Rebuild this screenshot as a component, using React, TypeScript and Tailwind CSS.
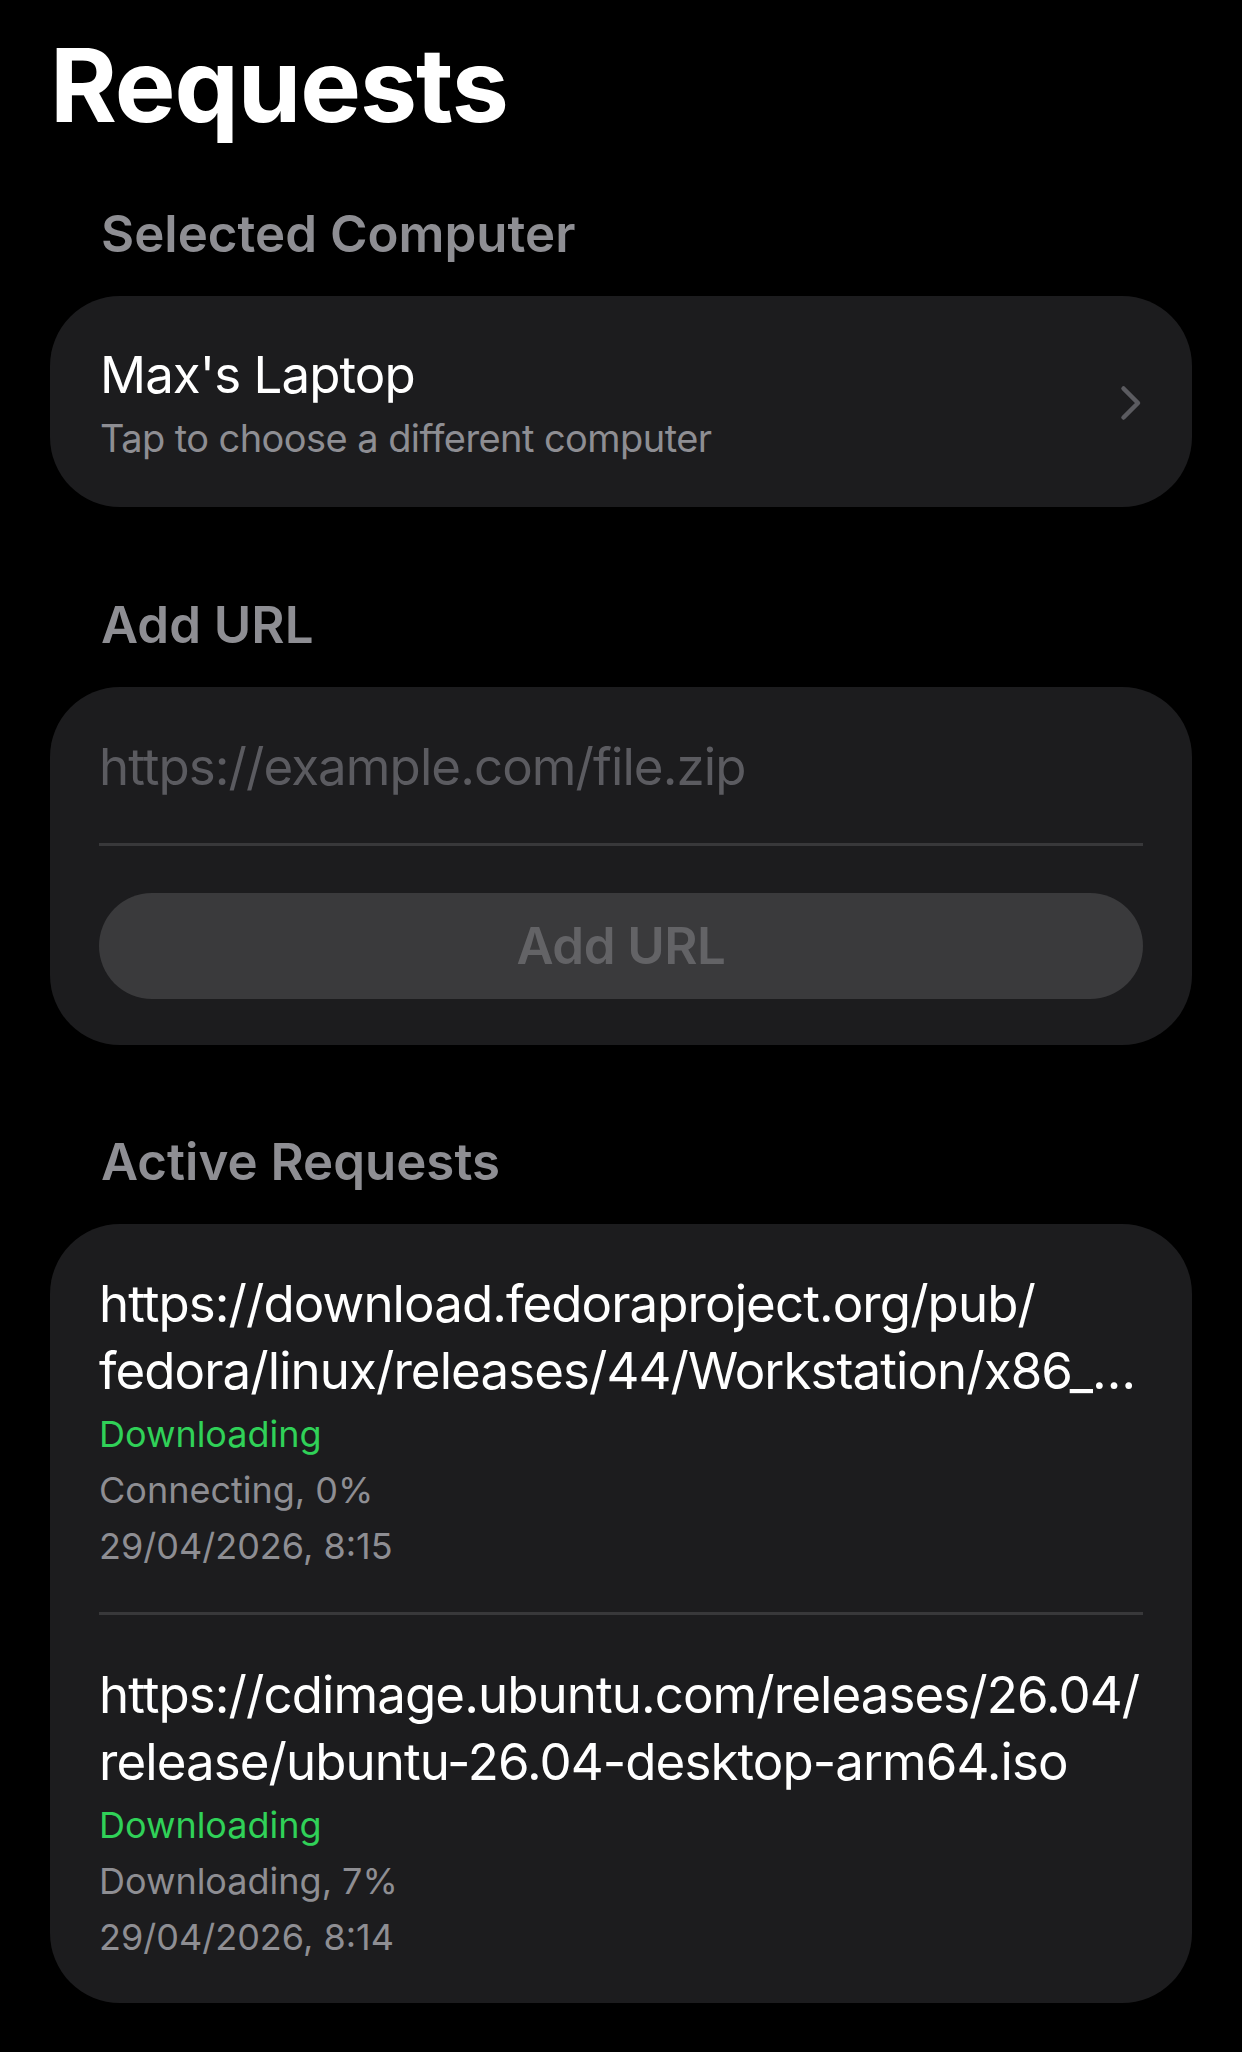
import React from "react";

interface RequestItem {
  lines: string[];
  status: string;
  detail: string;
  date: string;
}

const requests: RequestItem[] = [
  {
    lines: [
      "https://download.fedoraproject.org/pub/",
      "fedora/linux/releases/44/Workstation/x86_…",
    ],
    status: "Downloading",
    detail: "Connecting, 0%",
    date: "29/04/2026, 8:15",
  },
  {
    lines: [
      "https://cdimage.ubuntu.com/releases/26.04/",
      "release/ubuntu-26.04-desktop-arm64.iso",
    ],
    status: "Downloading",
    detail: "Downloading, 7%",
    date: "29/04/2026, 8:14",
  },
];

function SectionHeader({ children }: { children: React.ReactNode }) {
  return (
    <h2 className="px-[101px] text-[51px] leading-[61px] font-semibold text-[#8e8e93]">
      {children}
    </h2>
  );
}

function Chevron() {
  return (
    <svg width="22" height="36" viewBox="0 0 22 36" fill="none">
      <path
        d="M3.5 3.5 L18 18 L3.5 32.5"
        stroke="#5b5b60"
        strokeWidth="4.5"
        strokeLinecap="round"
        strokeLinejoin="round"
      />
    </svg>
  );
}

function RequestRow({ item }: { item: RequestItem }) {
  return (
    <div className="pt-[46px] pb-[38px]">
      {item.lines.map((line, i) => (
        <p
          key={i}
          className="whitespace-nowrap text-[51px] leading-[67px] tracking-[-0.018em] text-white"
        >
          {line}
        </p>
      ))}
      <p className="mt-[3px] text-[36px] leading-[55px] text-[#30d158]">{item.status}</p>
      <p className="text-[36px] leading-[56px] text-[#8e8e93]">{item.detail}</p>
      <p className="text-[36px] leading-[56px] text-[#8e8e93]">{item.date}</p>
    </div>
  );
}

export default function App() {
  return (
    <div
      className="min-h-screen w-full bg-black pt-[25px] pb-[49px] text-white"
      style={{ fontFamily: "Inter, 'Noto Sans', 'Liberation Sans', sans-serif" }}
    >
      <h1 className="px-[50px] text-[102px] leading-[120px] font-bold tracking-[-0.01em]">
        Requests
      </h1>

      {/* Selected computer */}
      <div className="mt-[58px]">
        <SectionHeader>Selected Computer</SectionHeader>
        <div className="mx-[50px] mt-[32px] flex items-center justify-between rounded-[70px] bg-[#1c1c1e] pl-[50px] pr-[50px] pt-[48px] pb-[45px]">
          <div className="flex flex-col gap-[9px]">
            <span className="text-[51px] leading-[61px] tracking-[-0.018em] text-white">
              Max's Laptop
            </span>
            <span className="text-[38px] leading-[48px] tracking-[-0.015em] text-[#8e8e93]">
              Tap to choose a different computer
            </span>
          </div>
          <Chevron />
        </div>
      </div>

      {/* Add URL */}
      <div className="mt-[87px]">
        <SectionHeader>Add URL</SectionHeader>
        <div className="mx-[50px] mt-[32px] rounded-[70px] bg-[#1c1c1e] px-[49px] pt-[49px] pb-[46px]">
          <input
            type="text"
            placeholder="https://example.com/file.zip"
            className="block h-[61px] w-full bg-transparent text-[51px] leading-[61px] tracking-[-0.018em] text-white outline-none placeholder:text-[#5b5b60]"
          />
          <div className="mt-[46px] h-[3px] bg-[#38383a]" />
          <button
            type="button"
            disabled
            className="mt-[47px] flex h-[106px] w-full items-center justify-center rounded-full bg-[#3a3a3c] text-[51px] font-semibold tracking-[-0.01em] text-[#636366]"
          >
            Add URL
          </button>
        </div>
      </div>

      {/* Active requests */}
      <div className="mt-[86px]">
        <SectionHeader>Active Requests</SectionHeader>
        <div className="mx-[50px] mt-[32px] rounded-[70px] bg-[#1c1c1e] px-[49px]">
          {requests.map((item, i) => (
            <div key={i}>
              {i > 0 && <div className="h-[3px] bg-[#38383a]" />}
              <RequestRow item={item} />
            </div>
          ))}
        </div>
      </div>
    </div>
  );
}
